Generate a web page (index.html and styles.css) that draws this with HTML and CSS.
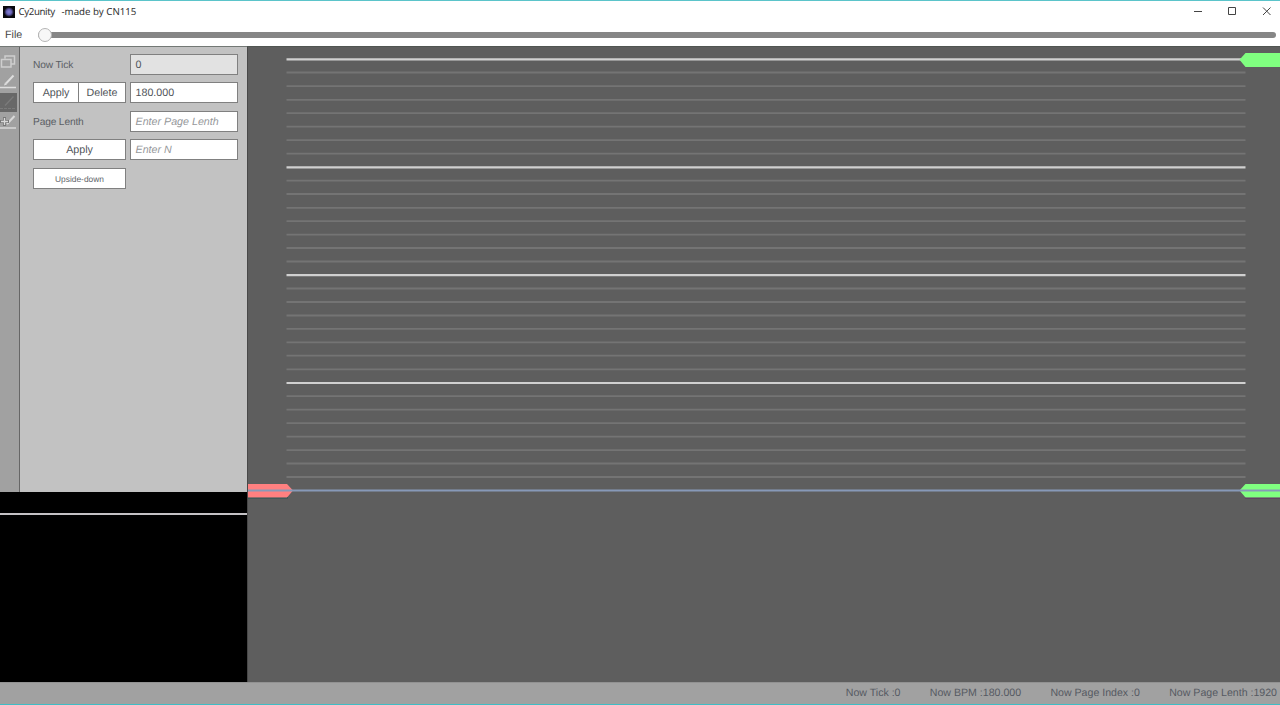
FILE: index.html
```html
<!DOCTYPE html>
<html lang="en">
<head>
<meta charset="utf-8">
<title>Cy2unity -made by CN115</title>
<link rel="stylesheet" href="styles.css">
</head>
<body>
<div class="window">
  <header class="titlebar">
    <svg class="app-icon" viewBox="0 0 12 12"><defs><radialGradient id="glow"><stop offset="0" stop-color="#8583d8"/><stop offset=".5" stop-color="#6862b4"/><stop offset="1" stop-color="#08080e"/></radialGradient></defs><rect width="12" height="12" fill="#08080c"/><circle cx="6" cy="6" r="5" fill="url(#glow)"/></svg>
    <h1 class="title"><span class="app-name">Cy2unity</span> <span>-made by CN115</span></h1>
    <svg class="controls" viewBox="0 0 86 20" fill="none" stroke="#444"><path d="M0 10.500h8"/><path d="M34.500 6.500h7v7h-7z"/><path d="M69 6.500l7.500 7.500M76.500 6.500l-7.500 7.500"/></svg>
  </header>
  <nav class="menubar">
    <span class="menu-file">File</span>
    <div class="slider"><div class="thumb"></div></div>
  </nav>
  <main class="workspace">
    <aside class="side">
      <div class="editor">
        <div class="tools">
          <svg class="tool" viewBox="0 0 17 19" fill="none" stroke="#cecece" stroke-width="1.500"><path d="M5 5.500V3h9.500v8h-3M1.500 6.500h9.500v7.500h-9.500z"/></svg>
          <svg class="tool" viewBox="0 0 17 19" fill="none" stroke="#dedede"><path d="M0 14.500h16" stroke-width="1.500"/><path d="M6 10.500l7.500-8" stroke-width="2"/><path d="M4 12.500l1-3 2 2z" fill="#dedede" stroke="none"/></svg>
          <svg class="tool selected" viewBox="0 0 17 19" fill="none" stroke="#7b7b7b"><path d="M0 15.500h16" stroke-dasharray="3 1"/><path d="M5 12.500l8.500-9" stroke-width="1.300"/></svg>
          <svg class="tool" viewBox="0 0 17 19" fill="none" stroke="#d8d8d8"><path d="M0 15h16" stroke-width="1.500"/><path d="M7 11l7.500-8" stroke-width="2"/><path d="M0 8.500h9M4.500 4v9" stroke="#777" stroke-width="3"/><path d="M1 8.500h7M4.500 5v7" stroke-width="1.300"/></svg>
        </div>
        <div class="form">
          <span class="label">Now Tick</span><div class="field readonly">0</div>
          <div class="pair"><div class="button">Apply</div><div class="button">Delete</div></div><div class="field">180.000</div>
          <span class="label">Page Lenth</span><div class="field hint">Enter Page Lenth</div>
          <div class="button">Apply</div><div class="field hint">Enter N</div>
          <div class="button small">Upside-down</div>
        </div>
      </div>
      <div class="preview"><div class="scanline"></div></div>
    </aside>
    <svg class="chart" viewBox="247 46 1033 636">
      <path class="beat-minor" d="M286.500 72.500H1245.500M286.500 86.200H1245.500M286.500 99.800H1245.500M286.500 113.200H1245.500M286.500 126.600H1245.500M286.500 140.200H1245.500M286.500 153.700H1245.500M286.500 180.600H1245.500M286.500 194H1245.500M286.500 207.800H1245.500M286.500 221.200H1245.500M286.500 234.700H1245.500M286.500 248H1245.500M286.500 261.500H1245.500M286.500 288.500H1245.500M286.500 302H1245.500M286.500 315.500H1245.500M286.500 328.800H1245.500M286.500 342.300H1245.500M286.500 355.700H1245.500M286.500 369.300H1245.500M286.500 396.200H1245.500M286.500 409.600H1245.500M286.500 423.200H1245.500M286.500 436.600H1245.500M286.500 450.200H1245.500M286.500 463.500H1245.500M286.500 477H1245.500"/>
      <path class="beat-major" d="M286.500 59.300H1245.500M286.500 167.400H1245.500M286.500 275.100H1245.500M286.500 383H1245.500"/>
      <path fill="#245454" d="M248 497h40v1.500h-40z"/><path class="marker-start" d="M248 484H287L293 490.500L287 497.500H248z"/>
      <path class="marker" d="M1280 53H1245.500L1239.500 59.700L1245.500 67H1280z"/>
      <path fill="#642466" d="M1245 497h35v1.500h-35z"/><path class="marker" d="M1280 484H1245.500L1239.500 490.500L1245.500 497.500H1280z"/>
      <path class="playhead" d="M248 490.500H1280"/>
      <path d="M247.500 46V682" stroke="#484848"/><path d="M247 46.500H1280" stroke="#505552"/>
    </svg>
  </main>
  <footer class="statusbar">
    <span>Now Tick :0</span><span>Now BPM :180.000</span><span>Now Page Index :0</span><span>Now Page Lenth :1920</span>
  </footer>
</div>
</body>
</html>
```
FILE: styles.css
```css
* { box-sizing: border-box; }
body { margin: 0; }
.window {
  width: 1280px; height: 705px; overflow: hidden;
  display: flex; flex-direction: column;
  border-top: 1px solid #5bc4ca; border-bottom: 1px solid #3fbdc5;
  background: #fff; color: #505459;
  font: 10.700px/14px "Liberation Sans", Arial, sans-serif;
  text-rendering: geometricPrecision;
}
.titlebar { height: 23px; display: flex; align-items: center; padding: 0 9px 2px 3px; }
.app-icon { width: 12px; height: 12px; margin-right: 3.500px; }
.title { margin: 0; display: flex; gap: 6px; font: 9.700px/14px "Noto Sans", sans-serif; color: #333; white-space: nowrap; }
.app-name { width: 37px; letter-spacing: -.400px; }
.controls { width: 86px; height: 20px; margin: -1px -9px 0 auto; }
.menubar { height: 22px; display: flex; align-items: center; padding: 0 4px 0 5px; }
.menu-file { width: 33px; color: #444; }
.slider { flex: 1; height: 6px; border-radius: 3px; background: #868686; display: flex; align-items: center; }
.thumb { width: 14px; height: 14px; flex: none; border: 1px solid #b5b5b5; border-radius: 50%; background: #f7f7f7; }
.workspace { height: 636px; display: flex; }
.side { width: 247px; display: flex; flex-direction: column; }
.editor { height: 446px; display: flex; border-top: 1px solid #737875; background: #c2c2c2; }
.tools { width: 20px; padding-top: 6px; display: flex; flex-direction: column; gap: 1px; background: #a1a1a1; border-right: 1px solid #666; }
.tool { width: 17px; height: 19px; }
.selected { background: #686868; }
.form {
  flex: 1; padding: 7px 9px 0 13px; display: grid;
  grid-template-columns: 93px 108px; grid-auto-rows: 21px;
  column-gap: 4px; row-gap: 7.400px; align-content: start;
}
.label { font-size: 10.200px; letter-spacing: -.150px; line-height: 23px; color: #5a5e64; }
.field, .button { height: 21px; border: 1px solid #808080; background: #fff; line-height: 20px; white-space: nowrap; }
.field { padding-left: 4.500px; }
.readonly { background: #e2e2e2; }
.hint { font-style: italic; color: #96989b; }
.button { text-align: center; }
.pair { display: grid; grid-template-columns: 46px 47px; }
.pair .button + .button { border-left: 0; }
.small { font-size: 8.400px; color: #62666b; }
.preview { flex: 1; background: #000; padding-top: 21px; }
.scanline { height: 2px; background: #c4c2c5; }
.chart { width: 1033px; height: 636px; background: #5e5e5e; }
.beat-minor { stroke: #747474; stroke-width: 1.800; }
.beat-major { stroke: #d0d0d0; stroke-width: 2.200; }
.marker { fill: #80ff80; }
.marker-start { fill: #ff8080; }
.playhead { stroke: #8799b8; stroke-width: 2; }
.statusbar { height: 22px; display: flex; justify-content: flex-end; align-items: center; gap: 29.300px; padding: 0 3px 1px 0; background: #a1a1a1; border-top: 1px solid #929292; font-size: 10.600px; color: #555961; }
```
